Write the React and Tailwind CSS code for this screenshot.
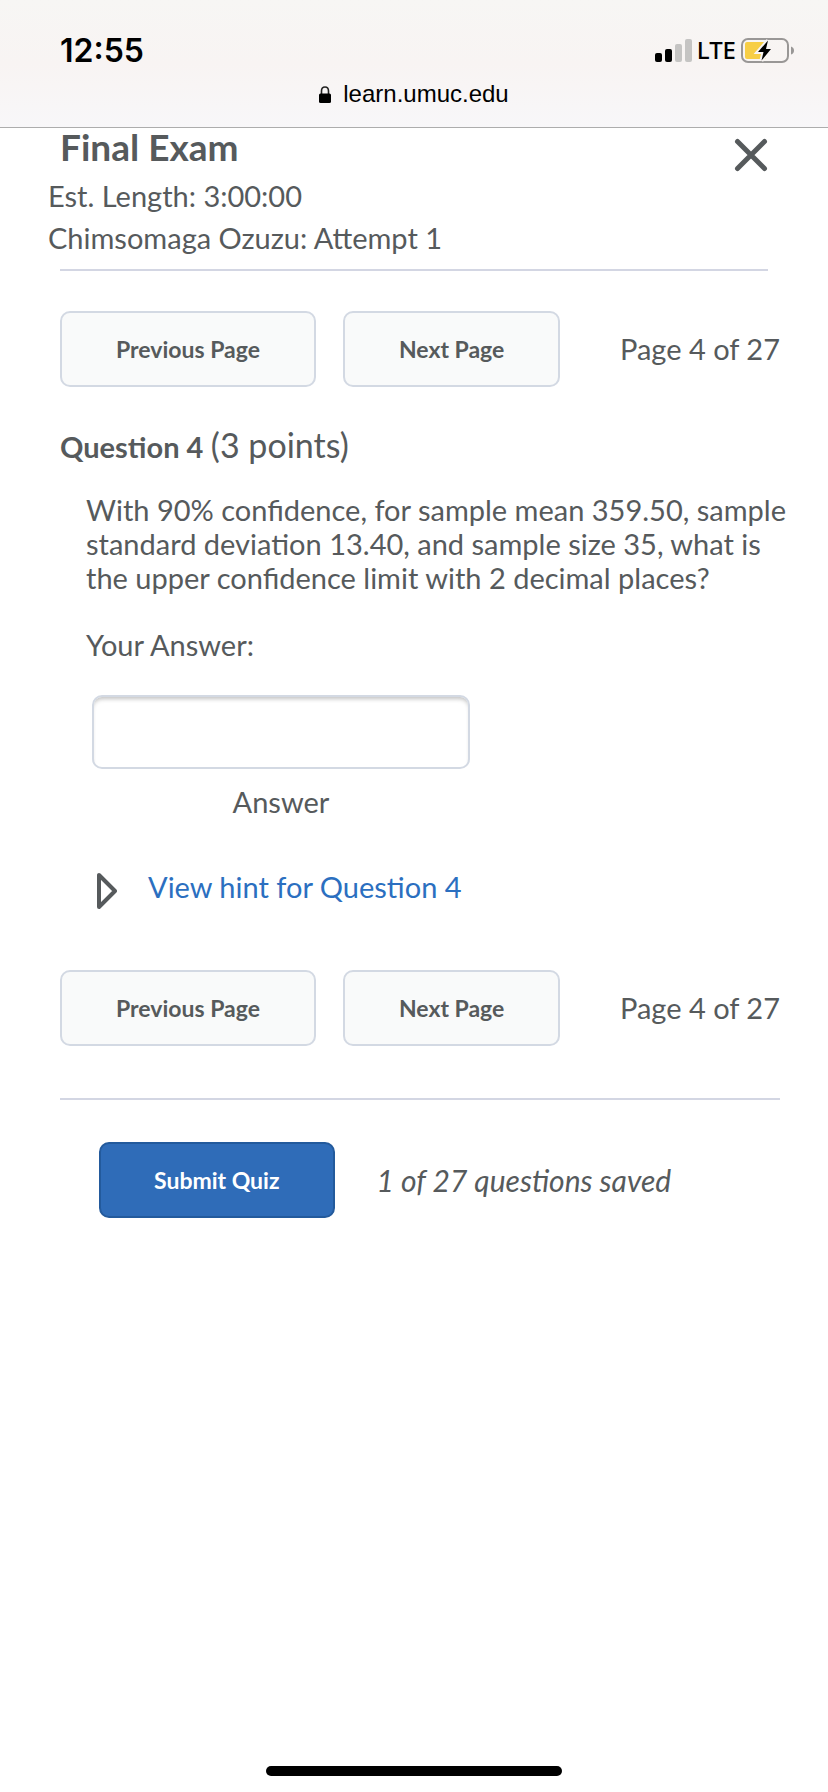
import { useState } from "react";

const SignalIcon = () => (
  <svg width="37" height="23" viewBox="0 0 37 23" aria-hidden="true">
    <rect x="0" y="14" width="7" height="9" rx="2" fill="#000" />
    <rect x="10" y="10" width="7" height="13" rx="2" fill="#000" />
    <rect x="20" y="5" width="7" height="18" rx="2" fill="#c5c4c3" />
    <rect x="30" y="0" width="7" height="23" rx="2" fill="#c5c4c3" />
  </svg>
);

const BatteryIcon = () => (
  <svg width="53" height="25" viewBox="0 0 53 25" aria-hidden="true">
    <rect x="1" y="1" width="46" height="23" rx="6" fill="none" stroke="#999796" strokeWidth="2" />
    <path d="M6 4 H25 V21 H6 Q4 21 4 19 V6 Q4 4 6 4 Z" fill="#f7ce46" />
    <path d="M50 8.5 Q53 9.5 53 12.5 Q53 15.5 50 16.5 Z" fill="#999796" />
    <path
      d="M27 2.5 L17 14 H22.5 L20.5 22.5 L30 11 H25 Z"
      fill="#000"
      stroke="#f8f4f3"
      strokeWidth="4"
      paintOrder="stroke"
    />
  </svg>
);

const LockIcon = () => (
  <svg width="12" height="17" viewBox="0 0 12 17" aria-hidden="true">
    <path d="M2.5 9 V5 Q2.5 1 6 1 Q9.5 1 9.5 5 V9" fill="none" stroke="#222" strokeWidth="1.6" />
    <rect x="0" y="7.5" width="12" height="9.5" rx="1.5" fill="#000" />
  </svg>
);

const StatusBar = () => (
  <header className="h-32 border-b border-[#adadad] bg-linear-to-b from-[#f7f6f4] via-[#f8f4f3] to-[#f8f7f9] text-black">
    <div className="flex h-[78px] items-end justify-between pl-[60px] pr-[34px]">
      <span className="font-['Inter',sans-serif] text-[32px] font-semibold leading-[54px]">12:55</span>
      <div className="flex h-[56px] items-center">
        <SignalIcon />
        <span className="mx-[5px] font-['Noto_Sans',sans-serif] text-2xl font-medium leading-8">LTE</span>
        <BatteryIcon />
      </div>
    </div>
    <div className="flex items-center justify-center gap-3 font-['Liberation_Sans',sans-serif] text-2xl">
      <LockIcon />
      <span>learn.umuc.edu</span>
    </div>
  </header>
);

const pageButton =
  "h-[76px] rounded-[10px] border-2 border-[#d3d9e3] bg-[#f9fafa] px-[54px] text-[23px] font-bold";

const PageNav = () => (
  <nav className="flex items-center">
    <button type="button" className={pageButton}>Previous Page</button>
    <button type="button" className={`ml-[27px] ${pageButton}`}>Next Page</button>
    <span className="ml-auto">Page 4 of 27</span>
  </nav>
);

const App = () => {
  const [answer, setAnswer] = useState("");

  return (
    <div className="flex min-h-screen flex-col bg-white font-['Lato',sans-serif] text-[29px] leading-[34px] text-[#565a5c]">
      <StatusBar />

      <main className="flex-1 px-12 pl-[60px]">
        <div className="mr-3 flex h-[42px] items-start justify-between">
          <h1 className="text-[37px] font-bold leading-[38px]">Final Exam</h1>
          <button type="button" aria-label="Close" className="pt-[10px]">
            <svg width="34" height="34" viewBox="0 0 34 34" aria-hidden="true">
              <path d="M3.5 3.5 L30.5 30.5 M30.5 3.5 L3.5 30.5" fill="none" stroke="#565a5c" strokeWidth="5" strokeLinecap="round" />
            </svg>
          </button>
        </div>
        <div className="-ml-3 mt-[5px] leading-[42px]">
          <p>Est. Length: 3:00:00</p>
          <p>Chimsomaga Ozuzu: Attempt 1</p>
        </div>
        <hr className="mb-10 mr-3 mt-[10px] border-t-2 border-[#d3d6e3]" />

        <PageNav />

        <h2 className="mt-10 leading-10">
          <strong>Question 4</strong> <span className="text-[34px] leading-none">(3 points)</span>
        </h2>

        <section className="pl-[26px]">
          <p className="-mr-3 mt-[26px]">
            With 90% confidence, for sample mean 359.50, sample standard deviation 13.40, and sample size 35, what is
            the upper confidence limit with 2 decimal places?
          </p>
          <p className="mt-[33px]">Your Answer:</p>

          <div className="ml-[6px] mt-[33px] flex w-[378px] flex-col items-center gap-4">
            <input
              id="answer"
              type="text"
              value={answer}
              onChange={(e) => setAnswer(e.target.value)}
              className="h-[74px] w-full rounded-[10px] border-2 border-[#d3d9e3] bg-white px-5 shadow-[inset_0_4px_4px_-2px_#c2c2c2] outline-none"
            />
            <label htmlFor="answer">Answer</label>
          </div>

          <div className="ml-[11px] mt-[51px] flex items-start gap-[31px]">
            <svg width="20" height="42" viewBox="0 0 20 42" aria-hidden="true">
              <path d="M2 5 V37 L18 21 Z" fill="none" stroke="#565a5c" strokeWidth="4" strokeLinejoin="round" />
            </svg>
            <a href="#hint" className="text-[#2b6fc0]">View hint for Question 4</a>
          </div>
        </section>

        <div className="mt-[58px]">
          <PageNav />
        </div>

        <hr className="mt-[52px] border-t-2 border-[#d3d6e3]" />

        <div className="ml-[39px] mt-[42px] flex items-center gap-[42px]">
          <button
            type="button"
            className="h-[76px] rounded-[10px] border-2 border-[#235a9c] bg-[#2f6cb8] px-[53px] text-[23px] font-bold text-white"
          >
            Submit Quiz
          </button>
          <em className="text-3xl">1 of 27 questions saved</em>
        </div>
      </main>

      <footer className="flex justify-center pb-4">
        <div className="h-[10px] w-[296px] rounded-full bg-black" />
      </footer>
    </div>
  );
};

export default App;
